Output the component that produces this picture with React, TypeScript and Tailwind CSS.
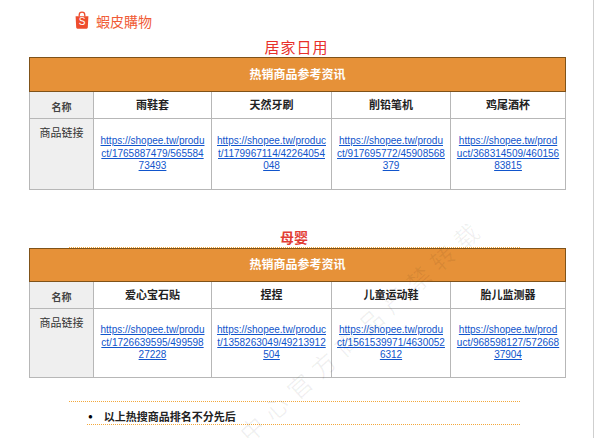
import React from "react";

type Item = {
    name: string;
    lines: string[];
};

const homeItems: Item[] = [
    { name: "雨鞋套", lines: ["https://shopee.tw/produ", "ct/1765887479/565584", "73493"] },
    { name: "天然牙刷", lines: ["https://shopee.tw/produc", "t/1179967114/42264054", "048"] },
    { name: "削铅笔机", lines: ["https://shopee.tw/produ", "ct/917695772/45908568", "379"] },
    { name: "鸡尾酒杯", lines: ["https://shopee.tw/prod", "uct/368314509/460156", "83815"] }
];

const babyItems: Item[] = [
    { name: "爱心宝石贴", lines: ["https://shopee.tw/produ", "ct/1726639595/499598", "27228"] },
    { name: "捏捏", lines: ["https://shopee.tw/produc", "t/1358263049/49213912", "504"] },
    { name: "儿童运动鞋", lines: ["https://shopee.tw/produ", "ct/1561539971/4630052", "6312"] },
    { name: "胎儿监测器", lines: ["https://shopee.tw/prod", "uct/968598127/572668", "37904"] }
];

/* -------- SHOPEE BAG LOGO -------- */
const BagIcon = () => (
    <div className="relative w-[14px] h-[18px]">
        <svg width="14" height="18" viewBox="0 0 14 18" className="absolute inset-0">
            <path d="M4.2 5.5 V4 a2.8 2.8 0 0 1 5.6 0 V5.5" fill="none" stroke="#ee4d2d" strokeWidth="1.3" />
            <path d="M0.6 5.2 H13.4 L12.8 16.6 a1.2 1.2 0 0 1 -1.2 1.1 H2.4 a1.2 1.2 0 0 1 -1.2 -1.1 Z" fill="#ee4d2d" />
        </svg>
        <span className="absolute left-0 right-0 top-[5px] text-center text-white text-[10px] leading-[12px] font-['Liberation_Sans',sans-serif]">
            S
        </span>
    </div>
);

/* -------- PRODUCT TABLE -------- */
const ProductTable = ({ items, compact }: { items: Item[]; compact?: boolean }) => (
    <table className="ml-[29px] w-[536px] table-fixed border-collapse">
        <colgroup>
            <col className="w-[64px]" />
            <col className="w-[118px]" />
            <col className="w-[120px]" />
            <col className="w-[119px]" />
            <col className="w-[115px]" />
        </colgroup>
        <tbody>
            <tr className={compact ? "h-[33px]" : "h-[34px]"}>
                <td
                    colSpan={5}
                    className="bg-[#e69138] border border-[#7f5219] text-center text-white text-[12px] font-bold"
                >
                    热销商品参考资讯
                </td>
            </tr>
            <tr className="h-[27px]">
                <td className="bg-[#efefef] border border-[#b7b7b7] text-center align-bottom pb-[3px] text-[10px] font-bold text-[#444]">
                    名称
                </td>
                {items.map((item) => (
                    <td
                        key={item.name}
                        className="border border-[#b7b7b7] text-center text-[11px] font-bold text-[#222]"
                    >
                        {item.name}
                    </td>
                ))}
            </tr>
            <tr className={compact ? "h-[69px]" : "h-[71px]"}>
                <td className="bg-[#efefef] border border-[#b7b7b7] text-center align-top pt-[6px] text-[11px] text-[#333]">
                    商品链接
                </td>
                {items.map((item) => (
                    <td key={item.name} className="border border-[#b7b7b7] text-center">
                        <a className="text-[10px] leading-[12.5px] text-[#1155cc] underline whitespace-nowrap">
                            {item.lines.map((line, i) => (
                                <span key={i} className="block">
                                    {line}
                                </span>
                            ))}
                        </a>
                    </td>
                ))}
            </tr>
        </tbody>
    </table>
);

const App = () => {
    return (
        <div className="relative w-[594px] h-[438px] overflow-hidden bg-white border-r border-[#cfcfcf] font-['Liberation_Sans','Noto_Sans_CJK_SC',sans-serif]">

            {/* -------- LOGO -------- */}
            <div className="flex items-end gap-[7px] pl-[75px] pt-[11px]">
                <BagIcon />
                <span className="text-[14px] leading-[15px] text-[#f05a35] font-['Noto_Sans_CJK_TC',sans-serif]">
                    蝦皮購物
                </span>
            </div>

            {/* -------- 居家日用 -------- */}
            <div className="mt-[9px] h-[19px] text-center text-[15px] leading-[19px] tracking-[1px] text-[#e8302a]">
                居家日用
            </div>
            <ProductTable items={homeItems} />

            {/* -------- 母婴 -------- */}
            <div className="mt-[40px] h-[17px] text-center text-[14px] leading-[17px] font-bold text-[#e23d34] pr-[5px]">
                母婴
            </div>
            <div className="ml-[69px] w-[451px] border-t border-dotted border-[#f3a83b]" />
            <ProductTable items={babyItems} compact />

            {/* -------- NOTES -------- */}
            <div className="mt-[23px] ml-[69px] w-[451px] border-t border-dotted border-[#f3a83b]" />
            <div className="ml-[87px] w-[433px] h-[23px] flex items-end border-b border-dotted border-[#f3a83b]">
                <span className="text-[8px] leading-[14px] text-black ml-[1px]">●</span>
                <span className="ml-[11px] text-[11px] leading-[14px] font-bold text-[#222]">
                    以上热搜商品排名不分先后
                </span>
            </div>

            {/* -------- WATERMARK -------- */}
            <div className="absolute left-[363px] top-[331px] -translate-x-1/2 -translate-y-1/2 rotate-[-42deg] whitespace-nowrap text-[24px] tracking-[8px] text-black/[0.06] pointer-events-none">
                中心官方商品严禁转载
            </div>
        </div>
    );
};

export default App;
